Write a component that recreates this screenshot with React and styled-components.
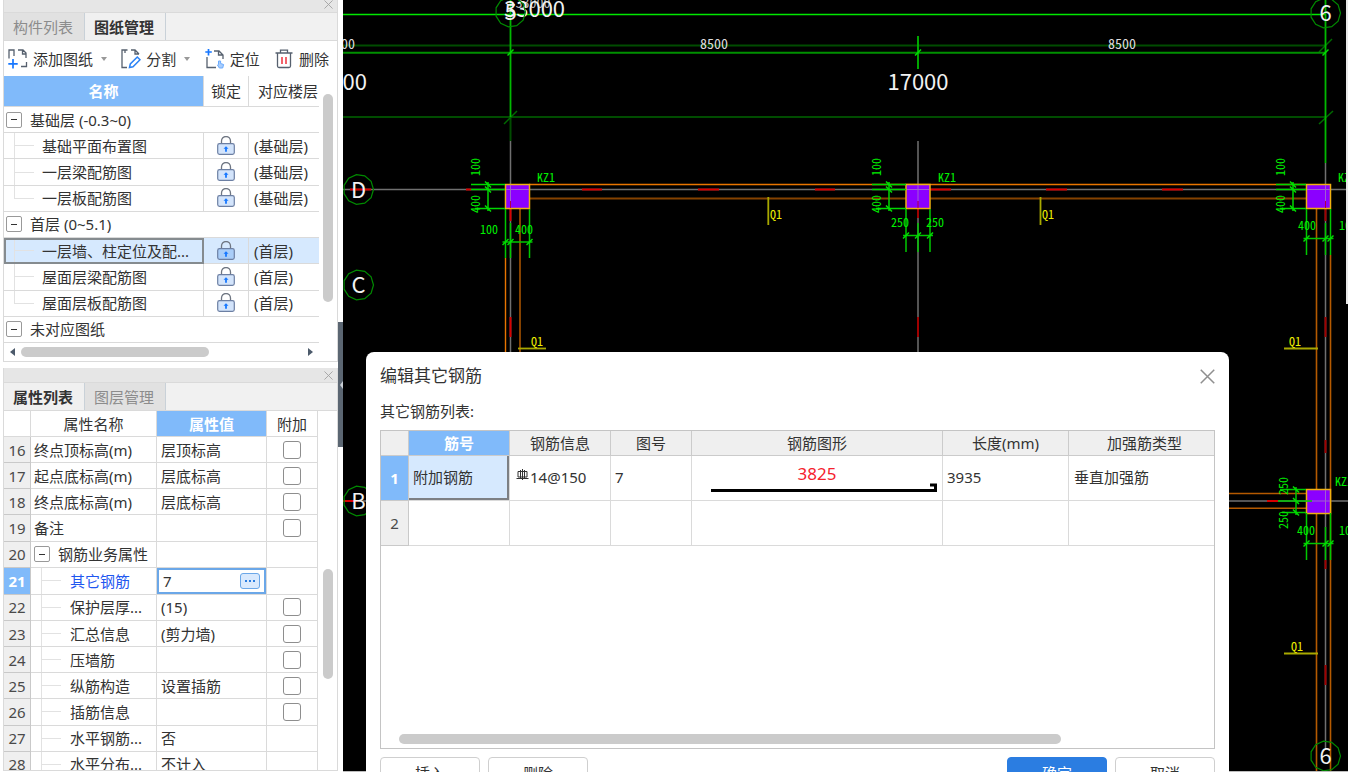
import React from "react";
import styled, { createGlobalStyle, css } from "styled-components";

const GlobalStyle = createGlobalStyle`
  * { box-sizing: border-box; }
  html, body { margin: 0; height: 100%; overflow: hidden; }
  body {
    background: #fff;
    color: #333;
    font: 15px/20px "Noto Sans", "Noto Sans CJK SC", sans-serif;
  }
  button, input { font: inherit; color: inherit; }
  button { border: 0; padding: 0; background: none; cursor: pointer; white-space: nowrap; }
`;

const line = "#dadada";
const accent = "#80bafa";

const Workspace = styled.div`
  display: flex;
  height: 100vh;
`;

/* ---------- sidebar ---------- */

const Sidebar = styled.aside`
  flex: 0 0 343px;
  display: flex;
  padding: 0 0 1px 3px;
`;

const PanelStack = styled.div`
  flex: 1;
  min-width: 0;
  display: flex;
  flex-direction: column;
  gap: 6px;
`;

const Panel = styled.section`
  display: flex;
  flex-direction: column;
  border: solid ${line};
  border-width: 0 1px 1px;
  overflow: hidden;
  ${(p) => p.$fill && css`flex: 1; min-height: 0;`}
`;

const TitleBar = styled.div`
  flex: none;
  display: flex;
  justify-content: flex-end;
  align-items: ${(p) => (p.$short ? "flex-start" : "center")};
  height: ${(p) => (p.$short ? 13 : 15)}px;
  padding: 0 4px;
  background: #e6e6e6;
  border-bottom: 1px solid ${line};
`;

const CloseButton = styled.button`
  display: flex;
  color: ${(p) => (p.$dark ? "#8f8f8f" : "#a2a2a2")};
`;

const TabBar = styled.div`
  flex: none;
  display: flex;
  height: 28px;
  background: #f1f1f1;
  border-bottom: 1px solid ${line};
`;

const Tab = styled.button`
  width: 81px;
  padding-right: 2px;
  border-right: 1px solid #c9d1d8;
  background: ${(p) => (p.$active ? "#f0f0f0" : "#e1e1e1")};
  color: ${(p) => (p.$active ? "#333" : "#8c8c8c")};
  font-weight: ${(p) => (p.$active ? 600 : 400)};
`;

const Toolbar = styled.div`
  flex: none;
  display: flex;
  justify-content: space-between;
  align-items: center;
  height: 35px;
  padding: 0 8px 0 4px;
`;

const ToolButton = styled.button`
  display: flex;
  align-items: center;
  gap: 5px;
`;

const Caret = styled.span`
  margin-left: 3px;
  border: solid transparent;
  border-width: 4px 3px 0;
  border-top-color: #999;
`;

const PanelBody = styled.div`
  flex: 1;
  min-height: 0;
  display: flex;
  justify-content: space-between;
  overflow: hidden;
`;

const ScrollRail = styled.div`
  flex: 0 0 18px;
  padding: ${(p) => p.$offset}px 0 0 4px;
`;

const ScrollThumb = styled.div`
  width: 10px;
  height: ${(p) => p.$length}px;
  border-radius: 5px;
  background: #cbcbcb;
`;

const HorizontalScroll = styled.div`
  flex: none;
  display: flex;
  align-items: center;
  gap: 6px;
  height: 18px;
  padding: 0 24px 0 6px;
`;

const HorizontalTrack = styled.div`
  flex: 1;
`;

const HorizontalThumb = styled.div`
  width: ${(p) => p.$share}%;
  height: 10px;
  border-radius: 5px;
  background: #cbcbcb;
`;

const ScrollArrow = styled.span`
  border: solid transparent;
  border-width: 4px 0 4px 5px;
  border-left-color: #4c5a6b;
  ${(p) => p.$left && css`
    border-width: 4px 5px 4px 0;
    border-right-color: #4c5a6b;
  `}
`;

const Table = styled.table`
  table-layout: fixed;
  border-collapse: separate;
  border-spacing: 0;
  width: ${(p) => p.$width};
  height: ${(p) => p.$height};
`;

const Head = styled.th`
  height: ${(p) => p.$height}px;
  padding: 0 0 0 ${(p) => p.$pad || 0}px;
  border: solid ${line};
  border-width: 0 1px 1px 0;
  font-weight: 400;
  white-space: nowrap;
  background: ${(p) => p.$fill || "#fff"};
  ${(p) => p.$open && css`border-right: 0;`}
  ${(p) => p.$active && css`
    background: ${accent};
    color: #fff;
    font-weight: 600;
  `}
`;

const Cell = styled.td`
  height: 26px;
  padding: 0 0 0 ${(p) => p.$pad || 4}px;
  border: solid ${line};
  border-width: 0 1px 1px 0;
  white-space: nowrap;
  overflow: hidden;
  ${(p) => p.$open && css`border-right: 0;`}
  ${(p) => p.$center && css`padding: 0; text-align: center;`}
  ${(p) => p.$selected && css`background-color: #d6e9fe;`}
`;

const BranchCell = styled(Cell)`
  background-image: linear-gradient(#e2e2e2, #e2e2e2), linear-gradient(#e2e2e2, #e2e2e2);
  background-repeat: no-repeat;
  background-size: 1px ${(p) => (p.$last ? "50%" : "100%")}, 20px 1px;
  background-position: 10px 0, 10px 50%;
  ${(p) => p.$selected && css`outline: 2px solid #858b8f; outline-offset: -2px;`}
  ${(p) => p.$current && css`color: #1f57f0;`}
`;

const NumberCell = styled.th`
  padding: 0;
  border: solid #c9c9c9;
  border-width: 0 1px 1px 0;
  background: #efefef;
  color: #4a4a4a;
  font-weight: 400;
  ${(p) => p.$active && css`
    background: ${accent};
    color: #fff;
    font-weight: 700;
  `}
`;

const GroupLabel = styled.div`
  display: flex;
  align-items: center;
  gap: 8px;
`;

const Toggle = styled.button`
  display: grid;
  place-items: center;
  width: 16px;
  height: 16px;
  border: 1px solid #999;
  border-radius: 2px;
  background: #fff;
`;

const ToggleDash = styled.span`
  width: 6px;
  height: 1px;
  background: #333;
`;

const LockButton = styled.button`
  display: flex;
  margin: 0 auto;
`;

const CheckBox = styled.input`
  appearance: none;
  display: block;
  width: 18px;
  height: 18px;
  margin: 0 auto;
  border: 1px solid #8e8e8e;
  border-radius: 3px;
  background: #fff;
`;

const ValueEditor = styled.div`
  display: flex;
  align-items: center;
  height: 26px;
  padding: 0 4px;
  border: 2px solid #6ba7e8;
`;

const ValueInput = styled.input`
  flex: 1;
  min-width: 0;
  height: 20px;
  padding: 0;
  border: 0;
  outline: 0;
  background: transparent;
`;

const MoreButton = styled.button`
  display: flex;
  align-items: center;
  justify-content: center;
  gap: 2px;
  width: 20px;
  height: 16px;
  border: 1px solid #6ba7e8;
  border-radius: 3px;
  background: #d9e9fd;
`;

const Dot = styled.span`
  width: 2px;
  height: 2px;
  background: #2b7de0;
`;

const Splitter = styled.div`
  flex: 0 0 5px;
  padding-top: 322px;
`;

const SplitterGrip = styled.button`
  display: grid;
  place-items: center end;
  width: 5px;
  height: 125px;
  background: #5b6672;
`;

const GripArrow = styled.span`
  border: solid transparent;
  border-width: 4px 3px 4px 0;
  border-right-color: #c9d0d6;
`;

/* ---------- drawing area ---------- */

const Canvas = styled.main`
  position: relative;
  flex: 1;
  min-width: 0;
  overflow: hidden;
  background: #bdbdbd;
`;

const Drawing = styled.svg`
  display: block;
  width: 100%;
  height: calc(100% - 1px);
  background: #000;
`;

/* half-width digits, as in CAD lettering */
const DimText = styled.text`
  font-family: "Noto Sans CJK SC", sans-serif;
  font-feature-settings: "hwid";
  font-size: ${(p) => p.$size || 12}px;
  fill: ${(p) => p.$color || "#00f000"};
`;

const AxisText = styled.text`
  font-family: "Noto Sans CJK SC", sans-serif;
  font-size: 22px;
  fill: #f2f2f2;
`;

const EdgeStrip = styled.div`
  position: absolute;
  top: 0;
  right: 0;
  width: 2px;
  height: 304px;
  background: #e8e8e8;
`;

/* ---------- dialog ---------- */

const Dialog = styled.section`
  position: absolute;
  top: 352px;
  left: 23px;
  right: 119px;
  padding: 0 14px 16px;
  border-radius: 8px;
  background: #fff;
`;

const DialogHeader = styled.header`
  display: flex;
  justify-content: space-between;
  align-items: center;
  height: 48px;
`;

const DialogTitle = styled.h1`
  margin: 0;
  font-size: 17px;
  line-height: 24px;
  font-weight: 400;
`;

const ListLabel = styled.h2`
  margin: 0 0 8px;
  font-size: 15px;
  line-height: 22px;
  font-weight: 400;
`;

const GridBox = styled.div`
  display: flex;
  flex-direction: column;
  justify-content: space-between;
  height: 319px;
  padding-bottom: 4px;
  border: 1px solid #c4c4c4;
`;

const GridScroll = styled.div`
  padding: 0 18px;
`;

const GridHead = styled(Head)`
  height: 25px;
  border-color: #cbcbcb;
`;

const GridCell = styled(Cell)`
  height: 45px;
  padding-bottom: ${(p) => (p.$center ? 0 : 2)}px;
  ${(p) => p.$selected && css`
    box-shadow: inset -2px -2px #7d8084;
  `}
`;

const RebarShape = styled.div`
  display: flex;
  flex-direction: column;
  align-items: center;
  height: 44px;
  padding-top: 9px;
`;

const RebarLength = styled.span`
  font-size: 17px;
  line-height: 18px;
  color: #f5222d;
`;

const RebarInfo = styled.span`
  display: flex;
  align-items: center;
  gap: 1px;
`;

const DialogFooter = styled.footer`
  display: flex;
  justify-content: space-between;
  margin-top: 8px;
`;

const ButtonGroup = styled.div`
  display: flex;
  gap: 8px;
`;

const ActionButton = styled.button`
  width: 100px;
  height: 32px;
  border: 1px solid #cfcfcf;
  border-radius: 4px;
  background: #fff;
  ${(p) => p.$primary && css`
    border-color: #2b7de1;
    background: #2b7de1;
    color: #fff;
  `}
`;

/* ---------- icons ---------- */

const CrossIcon = ({ size }) => (
  <svg width={size} height={size} viewBox="0 0 10 10" fill="none" stroke="currentColor">
    <path d="M.5.5l9 9M9.5.5l-9 9" />
  </svg>
);

const LockIcon = ({ strong }) => (
  <svg width="18" height="20" viewBox="0 0 18 20" fill="none">
    <path d="M4.500 8V5a4.500 4.500 0 0 1 9 0v3" stroke="#6f7682" strokeWidth="1.300" />
    <rect x=".7" y="7.700" width="16.600" height="10.600" rx="1.800" fill={strong ? "#a9cdf8" : "#d3e4fb"} stroke="#6c7fa3" strokeWidth="1.200" />
    <path d="M9 10.200l2.500 2.500H9.900v3.100H8.100v-3.100H6.500z" fill="#1677ff" />
  </svg>
);

const ToolIcon = ({ children }) => (
  <svg width="20" height="20" viewBox="0 0 20 20" fill="none" stroke="#56606e" strokeWidth="1.300">
    {children}
  </svg>
);

const AddIcon = () => (
  <ToolIcon>
    <path d="M1 9.500V1h5v6M10 1h5l3 3v5M14.500 1.500V5h3.500M18.500 13v4.500H13" />
    <path d="M5 10v9.500M.3 14.800h9.400" stroke="#1677ff" strokeWidth="1.700" />
  </ToolIcon>
);

const SplitIcon = () => (
  <ToolIcon>
    <path d="M6.500 1H1v17.500h5M4 1v3M10 1h4l4 4M14 1.500V5h4" />
    <path d="M8.500 18.500l.8-3.500 7-7 2.700 2.700-7 7z" stroke="#2a82f5" strokeWidth="1.500" fill="#fff" />
  </ToolIcon>
);

const LocateIcon = () => (
  <ToolIcon>
    <path d="M2 8v10.500h9M9 2h5l4 4v4M13.500 2.500V6h4" />
    <path d="M3.500 0v6.500M.3 3h6.500" stroke="#1677ff" strokeWidth="1.700" />
    <path d="M13.500 12v3.500l-1 .5 1.800 3h3.400l.9-3.500-3-1V12z" fill="#a9cdfb" stroke="#6aabff" strokeWidth="1" />
  </ToolIcon>
);

const TrashIcon = () => (
  <ToolIcon>
    <path d="M1.500 4h17M6.500 4V1.200h7V4M3.500 4v13a1.500 1.500 0 0 0 1.500 1.500h10a1.500 1.500 0 0 0 1.500-1.500V4" />
    <path d="M8 8v7M12 8v7" stroke="#f0323c" strokeWidth="1.500" />
  </ToolIcon>
);

const RebarGrade = () => (
  <svg width="13" height="18" viewBox="0 0 13 18" fill="none" stroke="#333">
    <path d="M6.500 1v11M2 3.500h9v5.500h-9zM4.500 2v8M8.500 2v8M.5 10.500h12" />
  </svg>
);

/* ---------- data ---------- */

const drawings = [
  { group: "基础层 (-0.3~0)" },
  { name: "基础平面布置图", floor: "(基础层)" },
  { name: "一层梁配筋图", floor: "(基础层)" },
  { name: "一层板配筋图", floor: "(基础层)", last: true },
  { group: "首层 (0~5.1)" },
  { name: "一层墙、柱定位及配...", floor: "(首层)", selected: true },
  { name: "屋面层梁配筋图", floor: "(首层)" },
  { name: "屋面层板配筋图", floor: "(首层)", last: true },
  { group: "未对应图纸" },
];

const properties = [
  { no: 16, name: "终点顶标高(m)", value: "层顶标高", check: true },
  { no: 17, name: "起点底标高(m)", value: "层底标高", check: true },
  { no: 18, name: "终点底标高(m)", value: "层底标高", check: true },
  { no: 19, name: "备注", value: "", check: true },
  { no: 20, name: "钢筋业务属性", group: true },
  { no: 21, name: "其它钢筋", value: "7", child: true, current: true },
  { no: 22, name: "保护层厚...", value: "(15)", child: true, check: true },
  { no: 23, name: "汇总信息", value: "(剪力墙)", child: true, check: true },
  { no: 24, name: "压墙筋", value: "", child: true, check: true },
  { no: 25, name: "纵筋构造", value: "设置插筋", child: true, check: true },
  { no: 26, name: "插筋信息", value: "", child: true, check: true },
  { no: 27, name: "水平钢筋...", value: "否", child: true },
  { no: 28, name: "水平分布...", value: "不计入", child: true },
];

const Group = ({ children }) => (
  <GroupLabel>
    <Toggle aria-label="折叠"><ToggleDash /></Toggle>
    {children}
  </GroupLabel>
);

/* ---------- panels ---------- */

const DrawingPanel = () => (
  <Panel>
    <TitleBar $short><CloseButton aria-label="关闭"><CrossIcon size={9} /></CloseButton></TitleBar>
    <TabBar>
      <Tab>构件列表</Tab>
      <Tab $active>图纸管理</Tab>
    </TabBar>
    <Toolbar>
      <ToolButton><AddIcon />添加图纸<Caret /></ToolButton>
      <ToolButton><SplitIcon />分割<Caret /></ToolButton>
      <ToolButton><LocateIcon />定位</ToolButton>
      <ToolButton><TrashIcon />删除</ToolButton>
    </Toolbar>
    <PanelBody>
      <Table $width="315px" $height="267px">
        <colgroup><col width="200" /><col width="45" /><col width="70" /></colgroup>
        <thead>
          <tr>
            <Head $height={31} $active>名称</Head>
            <Head $height={31}>锁定</Head>
            <Head $height={31} $pad={8} $open>对应楼层</Head>
          </tr>
        </thead>
        <tbody>
          {drawings.map((d) =>
            d.group ? (
              <tr key={d.group}>
                <Cell colSpan={3} $pad={2} $open><Group>{d.group}</Group></Cell>
              </tr>
            ) : (
              <tr key={d.name}>
                <BranchCell $pad={38} $last={d.last} $selected={d.selected}>{d.name}</BranchCell>
                <Cell $center $selected={d.selected}>
                  <LockButton aria-label="锁定"><LockIcon strong={d.selected} /></LockButton>
                </Cell>
                <Cell $open $pad={5} $selected={d.selected}>{d.floor}</Cell>
              </tr>
            )
          )}
        </tbody>
      </Table>
      <ScrollRail $offset={18}><ScrollThumb $length={208} /></ScrollRail>
    </PanelBody>
    <HorizontalScroll>
      <ScrollArrow $left />
      <HorizontalTrack><HorizontalThumb $share={67} /></HorizontalTrack>
      <ScrollArrow />
    </HorizontalScroll>
  </Panel>
);

const PropertyRow = ({ item }) => {
  const NameCell = item.child ? BranchCell : Cell;
  return (
    <tr>
      <NumberCell scope="row" $active={item.current}>{item.no}</NumberCell>
      <NameCell $pad={item.child ? 39 : 3} $current={item.current}>
        {item.group ? <Group>{item.name}</Group> : item.name}
      </NameCell>
      {item.current ? (
        <Cell $center>
          <ValueEditor>
            <ValueInput aria-label={item.name} defaultValue={item.value} />
            <MoreButton aria-label="编辑"><Dot /><Dot /><Dot /></MoreButton>
          </ValueEditor>
        </Cell>
      ) : (
        <Cell>{item.value}</Cell>
      )}
      <Cell $center>{item.check && <CheckBox type="checkbox" aria-label={item.name} />}</Cell>
    </tr>
  );
};

const PropertyPanel = () => (
  <Panel $fill>
    <TitleBar><CloseButton aria-label="关闭"><CrossIcon size={9} /></CloseButton></TitleBar>
    <TabBar>
      <Tab $active>属性列表</Tab>
      <Tab>图层管理</Tab>
    </TabBar>
    <PanelBody>
      <Table $width="314px" $height="367px">
        <colgroup><col width="27" /><col width="126" /><col width="110" /><col width="51" /></colgroup>
        <thead>
          <tr>
            <Head $height={26} />
            <Head $height={26}>属性名称</Head>
            <Head $height={26} $active>属性值</Head>
            <Head $height={26}>附加</Head>
          </tr>
        </thead>
        <tbody>
          {properties.map((item) => <PropertyRow key={item.no} item={item} />)}
        </tbody>
      </Table>
      <ScrollRail $offset={158}><ScrollThumb $length={110} /></ScrollRail>
    </PanelBody>
  </Panel>
);

/* ---------- CAD drawing ---------- */

const Lines = ({ color, width = 1, items }) => (
  <g stroke={color} strokeWidth={width}>
    {items.map(([x1, y1, x2, y2], i) => <line key={i} x1={x1} y1={y1} x2={x2} y2={y2} />)}
  </g>
);

const Bubble = ({ x, y, children }) => {
  const points = Array.from({ length: 11 }, (_, i) => {
    const a = (i * 2 * Math.PI) / 11;
    return `${(x + 15 * Math.cos(a)).toFixed(1)},${(y + 15 * Math.sin(a)).toFixed(1)}`;
  }).join(" ");
  return (
    <g>
      <polygon points={points} fill="none" stroke="#008a00" strokeWidth="1.200" />
      <AxisText x={x} y={y + 8} textAnchor="middle">{children}</AxisText>
    </g>
  );
};

const Ticks = ({ points, size = 3 }) => (
  <g stroke="#00e000" strokeWidth="1.500">
    {points.map(([x, y], i) => <line key={i} x1={x - size} y1={y + size} x2={x + size} y2={y - size} />)}
  </g>
);

const UprightText = ({ x, y, children }) => (
  <DimText transform={`translate(${x} ${y}) rotate(-90)`}>{children}</DimText>
);

const SideDimension = ({ x, edge }) => (
  <g>
    <Lines color="#00d800" width={1.5} items={[
      [x - 17, 184.5, edge, 184.5], [x - 17, 189.5, edge, 189.5],
      [x - 13, 208.5, edge, 208.5], [x, 182, x, 211],
    ]} />
    <g stroke="#00e000" strokeWidth="1.500">
      <path d={`M${x - 3} 181.500l6 6M${x - 3} 186.500l6 6M${x - 3} 205.500l6 6`} />
    </g>
    <UprightText x={x - 8} y={176}>100</UprightText>
    <UprightText x={x - 8} y={213}>400</UprightText>
  </g>
);

const BottomDimension = ({ xs, top, y, bottom }) => (
  <g>
    <Lines color="#00c800" width={1.5} items={[
      [xs[0], top, xs[0], bottom], [xs[1], top + 14, xs[1], bottom], [xs[2], top, xs[2], bottom],
      [xs[0] - 3, y, xs[2] + 3, y],
    ]} />
    <Ticks points={xs.map((x) => [x, y])} />
  </g>
);

const Column = ({ x, y }) => (
  <rect x={x} y={y} width="24" height="24" fill="#8b00ff" stroke="#f0b010" strokeWidth="1.500" />
);

const CadDrawing = () => (
  <Drawing viewBox="343 0 1005 771" preserveAspectRatio="xMinYMin slice">
    <Lines color="#707070" width={1.5} items={[
      [343, 189.5, 1348, 189.5], [510.5, 141, 510.5, 360], [918, 141, 918, 360],
      [1325.5, 163, 1325.5, 748], [343, 501, 1348, 501],
    ]} />
    <Lines color="#00e800" width={1.4} items={[[343, 14.5, 1326, 14.5]]} />
    <Lines color="#004c00" width={2} items={[
      [343, 45.5, 1326, 45.5], [343, 117, 1326, 117], [510.5, 117, 510.5, 141],
    ]} />
    <Lines color="#006a00" width={1.5} items={[
      [504, 124, 517, 111], [1319, 124, 1333, 111], [1319, 52, 1332, 39],
    ]} />
    <Lines color="#009000" width={2} items={[[343, 52.7, 1326, 52.7]]} />
    <Lines color="#00b800" width={1.8} items={[
      [510.5, 0, 510.5, 117], [918, 36, 918, 69], [1325.5, 0, 1325.5, 163],
    ]} />
    <Ticks points={[[510.5, 52.5], [918, 52.5], [1325.5, 52.5]]} />

    <Lines color="#e87500" width={1.4} items={[[529, 184.5, 1306, 184.5], [505.5, 258, 505.5, 360]]} />
    <Lines color="#854200" width={2} items={[[529, 198.5, 1306, 198.5], [520, 209, 520, 360]]} />
    <Lines color="#b55a00" width={1.6} items={[
      [1316.5, 209, 1316.5, 771], [1330.5, 255, 1330.5, 771],
      [1229, 493.5, 1306, 493.5], [1229, 508.3, 1306, 508.3],
    ]} />

    <Lines color="#d80000" width={2} items={[
      [466, 189.5, 471, 189.5], [582, 189.5, 602, 189.5], [698, 189.5, 719, 189.5],
      [815, 189.5, 835, 189.5], [930, 189.5, 951, 189.5], [1046, 189.5, 1067, 189.5],
      [1162, 189.5, 1183, 189.5], [350, 189.5, 371, 189.5], [343, 501, 358, 501],
      [510.5, 209, 510.5, 221], [510.5, 317, 510.5, 337], [1267, 501, 1278, 501],
    ]} />
    <Lines color="#a00000" width={2} items={[
      [918, 209, 918, 218], [918, 317, 918, 337], [1325.5, 209, 1325.5, 221],
      [1325.5, 317, 1325.5, 337], [1325.5, 440, 1325.5, 453], [1325.5, 560, 1325.5, 569],
      [1325.5, 665, 1325.5, 685],
    ]} />

    <Column x={505.5} y={184.5} />
    <Column x={906} y={184.5} />
    <Column x={1306.5} y={184.5} />
    <Column x={1306.5} y={489.5} />
    <Lines color="#a060d0" items={[
      [506, 189.5, 529, 189.5], [907, 189.5, 929, 189.5], [1307, 189.5, 1330, 189.5],
      [510.5, 185, 510.5, 201], [918, 185, 918, 201], [1325.5, 185, 1325.5, 201],
      [1307, 501, 1330, 501], [1325.5, 490, 1325.5, 513],
    ]} />
    <Lines color="#b00045" items={[
      [510.5, 201, 510.5, 208], [918, 201, 918, 208], [1325.5, 201, 1325.5, 208],
    ]} />

    <SideDimension x={488} edge={505} />
    <SideDimension x={889} edge={906} />
    <SideDimension x={1293} edge={1306} />
    <BottomDimension xs={[505.5, 510.5, 529.5]} top={209} y={242} bottom={258} />
    <BottomDimension xs={[906, 918, 930]} top={209} y={235.5} bottom={252} />
    <BottomDimension xs={[1306.5, 1325.5, 1330.5]} top={209} y={238.5} bottom={255} />
    <BottomDimension xs={[1306.5, 1325.5, 1330.5]} top={513} y={543.5} bottom={560} />
    <Lines color="#00c800" width={1.5} items={[
      [1280, 489.5, 1306, 489.5], [1278, 501, 1312, 501], [1282, 512.5, 1306, 512.5], [1296, 487, 1296, 515],
    ]} />
    <g stroke="#00e000" strokeWidth="1.500">
      <path d="M1293 486.500l6 6M1293 498l6 6M1293 509.500l6 6" />
    </g>
    <UprightText x={1288} y={495}>250</UprightText>
    <UprightText x={1288} y={529}>250</UprightText>

    <DimText x="480" y="234">100</DimText>
    <DimText x="515" y="234">400</DimText>
    <DimText x="891" y="227">250</DimText>
    <DimText x="926" y="227">250</DimText>
    <DimText x="1298" y="230">400</DimText>
    <DimText x="1339" y="230">100</DimText>
    <DimText x="1297" y="535">400</DimText>
    <DimText x="1339" y="535">100</DimText>
    <DimText x="537" y="182">KZ1</DimText>
    <DimText x="938" y="182">KZ1</DimText>
    <DimText x="1338" y="182">KZ1</DimText>
    <DimText x="1335" y="486">KZ1</DimText>

    <Lines color="#a8a800" width={1.8} items={[
      [768.3, 197, 768.3, 225], [1040.5, 197, 1040.5, 225],
      [518, 348.5, 546, 348.5], [1284, 348.5, 1318, 348.5], [1284, 653.5, 1318, 653.5],
    ]} />
    {[[770, 219], [1042, 219], [531, 346], [1289, 346], [1291, 651]].map(([x, y]) => (
      <DimText key={`${x}-${y}`} x={x} y={y} $color="#eeee00">Q1</DimText>
    ))}

    <DimText x="355" y="49" textAnchor="end" $size={14} $color="#ddd">8500</DimText>
    <DimText x="714" y="49" textAnchor="middle" $size={14} $color="#ddd">8500</DimText>
    <DimText x="1122" y="49" textAnchor="middle" $size={14} $color="#ddd">8500</DimText>
    <DimText x="533" y="8" textAnchor="middle" $size={14} $color="#bbb">33000</DimText>
    <AxisText x="504" y="17">33000</AxisText>
    <AxisText x="367" y="90" textAnchor="end">17000</AxisText>
    <AxisText x="918" y="90" textAnchor="middle">17000</AxisText>
    <Bubble x={510.5} y={12}>5</Bubble>
    <Bubble x={1325.5} y={13}>6</Bubble>
    <Bubble x={1325.5} y={756}>6</Bubble>
    <Bubble x={358.5} y={189.5}>D</Bubble>
    <Bubble x={358.5} y={285}>C</Bubble>
    <Bubble x={358.5} y={501}>B</Bubble>
  </Drawing>
);

/* ---------- dialog ---------- */

const RebarDialog = () => (
  <Dialog role="dialog" aria-labelledby="rebar-title">
    <DialogHeader>
      <DialogTitle id="rebar-title">编辑其它钢筋</DialogTitle>
      <CloseButton $dark aria-label="关闭"><CrossIcon size={15} /></CloseButton>
    </DialogHeader>
    <ListLabel>其它钢筋列表:</ListLabel>
    <GridBox>
      <Table $width="100%">
        <colgroup>
          <col width="28" /><col width="101" /><col width="101" /><col width="81" />
          <col /><col width="126" /><col width="145" />
        </colgroup>
        <thead>
          <tr>
            <GridHead $fill="#efefef" />
            <GridHead $active>筋号</GridHead>
            <GridHead $fill="#efefef">钢筋信息</GridHead>
            <GridHead $fill="#efefef">图号</GridHead>
            <GridHead $fill="#efefef">钢筋图形</GridHead>
            <GridHead $fill="#efefef">长度(mm)</GridHead>
            <GridHead $fill="#efefef" $pad={6} $open>加强筋类型</GridHead>
          </tr>
        </thead>
        <tbody>
          <tr>
            <NumberCell scope="row" $active>1</NumberCell>
            <GridCell $selected>附加钢筋</GridCell>
            <GridCell $pad={6}><RebarInfo><RebarGrade />14@150</RebarInfo></GridCell>
            <GridCell>7</GridCell>
            <GridCell $center>
              <RebarShape>
                <RebarLength>3825</RebarLength>
                <svg width="240" height="9" viewBox="0 0 240 9" fill="none" stroke="#000" strokeWidth="3">
                  <path d="M14 7.500H238.500V2H233" />
                </svg>
              </RebarShape>
            </GridCell>
            <GridCell>3935</GridCell>
            <GridCell $pad={5} $open>垂直加强筋</GridCell>
          </tr>
          <tr>
            <NumberCell scope="row">2</NumberCell>
            <GridCell /><GridCell /><GridCell /><GridCell /><GridCell /><GridCell $open />
          </tr>
        </tbody>
      </Table>
      <GridScroll><HorizontalThumb $share={83} /></GridScroll>
    </GridBox>
    <DialogFooter>
      <ButtonGroup>
        <ActionButton>插入</ActionButton>
        <ActionButton>删除</ActionButton>
      </ButtonGroup>
      <ButtonGroup>
        <ActionButton $primary>确定</ActionButton>
        <ActionButton>取消</ActionButton>
      </ButtonGroup>
    </DialogFooter>
  </Dialog>
);

export default function App() {
  return (
    <Workspace>
      <GlobalStyle />
      <Sidebar>
        <PanelStack>
          <DrawingPanel />
          <PropertyPanel />
        </PanelStack>
        <Splitter>
          <SplitterGrip aria-label="收起"><GripArrow /></SplitterGrip>
        </Splitter>
      </Sidebar>
      <Canvas>
        <CadDrawing />
        <EdgeStrip />
        <RebarDialog />
      </Canvas>
    </Workspace>
  );
}
